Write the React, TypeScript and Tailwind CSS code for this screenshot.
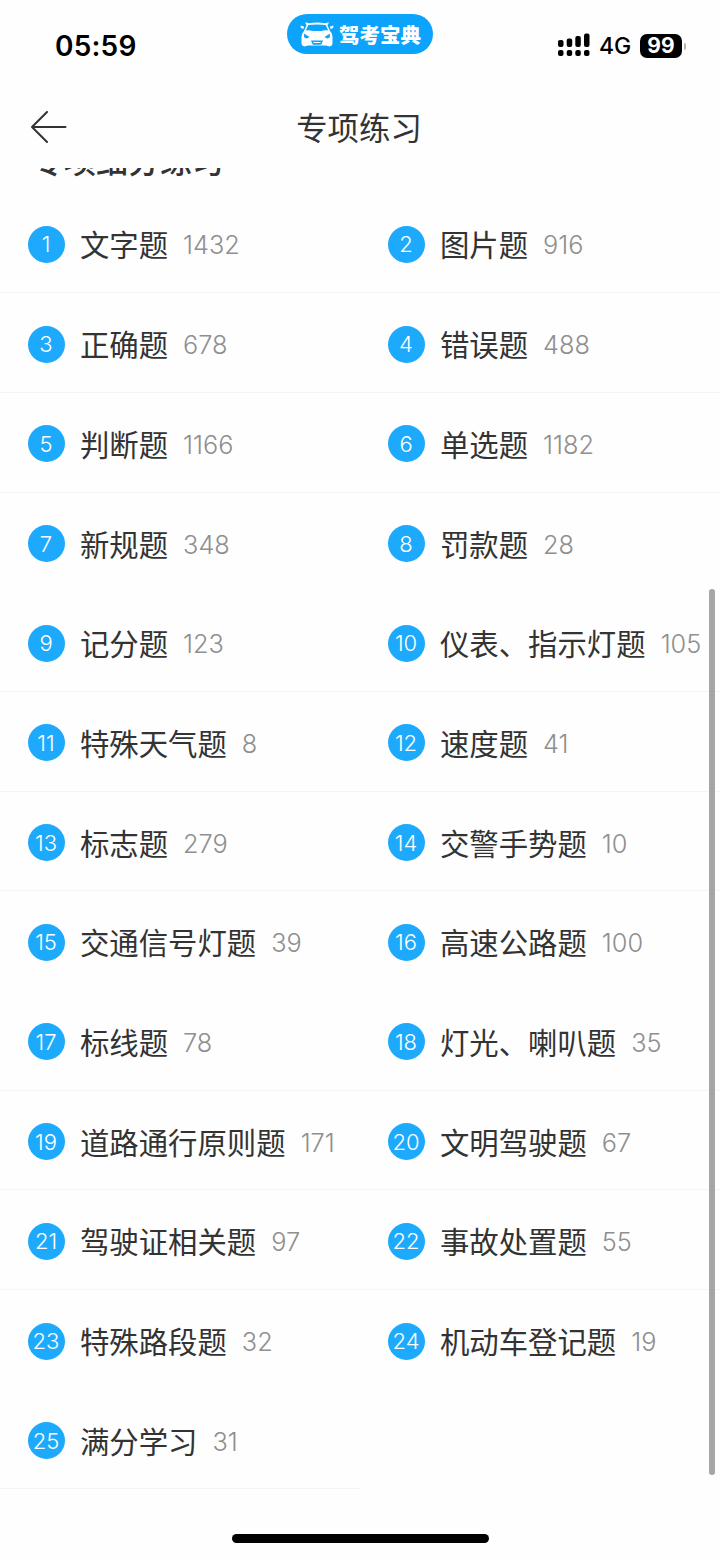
import clsx from "clsx";

const topics = [
    { title: "文字题", count: 1432 },
    { title: "图片题", count: 916 },
    { title: "正确题", count: 678 },
    { title: "错误题", count: 488 },
    { title: "判断题", count: 1166 },
    { title: "单选题", count: 1182 },
    { title: "新规题", count: 348 },
    { title: "罚款题", count: 28 },
    { title: "记分题", count: 123 },
    { title: "仪表、指示灯题", count: 105 },
    { title: "特殊天气题", count: 8 },
    { title: "速度题", count: 41 },
    { title: "标志题", count: 279 },
    { title: "交警手势题", count: 10 },
    { title: "交通信号灯题", count: 39 },
    { title: "高速公路题", count: 100 },
    { title: "标线题", count: 78 },
    { title: "灯光、喇叭题", count: 35 },
    { title: "道路通行原则题", count: 171 },
    { title: "文明驾驶题", count: 67 },
    { title: "驾驶证相关题", count: 97 },
    { title: "事故处置题", count: 55 },
    { title: "特殊路段题", count: 32 },
    { title: "机动车登记题", count: 19 },
    { title: "满分学习", count: 31 },
];

// Rows (0-based) whose hairline is not drawn
const plainRows = [3, 7, 11];

function CarLogo() {
    return (
        <svg viewBox="0 0 34 26" className="h-[26px] w-[34px] shrink-0" fill="none">
            <path d="M4.500 10.500 8 3M29.500 10.500 26 3" stroke="white" strokeWidth="1.500" />
            <path d="M5 1.200 9 2.200Q17 1 25 2.200L29 1.200 27.500 4.200Q17 2.800 6.500 4.200Z" fill="white" />
            <path d="M0.500 4.500 4 5.500 3.500 8 0.800 7ZM33.500 4.500 30 5.500 30.500 8 33.200 7Z" fill="white" />
            <path
                d="M4.500 9.500 9 9.200Q17 11 25 9.200L29.500 9.500Q32.500 12 32.500 15.500V22Q32.500 25 29.500 25.500L26 24.500H8L4.500 25.500Q1.500 25 1.500 22V15.500Q1.500 12 4.500 9.500Z"
                fill="white"
            />
            <path d="M4 12.500 9.500 16 7 17.500 4.200 16.500ZM30 12.500 24.500 16 27 17.500 29.800 16.500Z" fill="#0ba3fb" />
            <path d="M11 19.500H23L21.200 23.800H12.800Z" fill="#0ba3fb" />
            <path d="M13.500 21.500H20.500" stroke="white" strokeWidth="1" />
        </svg>
    );
}

function StatusBar() {
    return (
        <header className="flex h-[86px] items-start">
            <div className="w-[287px] pl-[55px] pt-[28px] font-['Inter'] text-[28px] font-semibold leading-9 tracking-[0.2px] text-black">
                05:59
            </div>
            <div className="mt-[14px] flex h-10 w-[146px] items-center rounded-full bg-[#0ba3fb] pl-[13px]">
                <CarLogo />
                <span className="ml-[5px] whitespace-nowrap text-[20.5px] font-black leading-10 text-white">驾考宝典</span>
            </div>
            <div className="ml-[125px] mt-[34px] flex items-center">
                <svg viewBox="0 0 32 24" className="-mt-[2px] h-6 w-8" fill="black">
                    <rect x="0" y="7" width="5.500" height="7" rx="2" />
                    <rect x="8.700" y="5.500" width="5.500" height="8.500" rx="2" />
                    <rect x="17.300" y="3" width="5.500" height="11" rx="2" />
                    <rect x="26" y="0.500" width="5.500" height="13.500" rx="2" />
                    <rect x="0" y="17" width="5.500" height="6" rx="2" />
                    <rect x="8.700" y="17" width="5.500" height="6" rx="2" />
                    <rect x="17.300" y="17" width="5.500" height="6" rx="2" />
                    <rect x="26" y="17" width="5.500" height="6" rx="2" />
                </svg>
                <span className="ml-[9px] w-[41px] font-['Inter'] text-[23px] font-medium leading-6 text-black">4G</span>
                <span className="-mt-px flex h-[24px] w-[42px] items-center justify-center rounded-[7px] bg-black font-['Inter'] text-[21px] font-bold leading-none text-white">
                    99
                </span>
                <span className="ml-[2px] h-[7px] w-[2px] rounded-r-full bg-[#b5b5b5]" />
            </div>
        </header>
    );
}

function NavBar() {
    return (
        <nav className="grid h-[82px] grid-cols-[100px_1fr_100px] items-center">
            <svg viewBox="0 0 36 32" className="ml-[31px] h-8 w-9" fill="none" stroke="#333333" strokeWidth="2" strokeLinecap="round" strokeLinejoin="round">
                <path d="M16 1 1 16 16 31M1 16H34.500" />
            </svg>
            <h1 className="-ml-[2px] pb-px text-center text-[31.4px] font-normal leading-10 text-[#333333]">专项练习</h1>
        </nav>
    );
}

function TopicCell({ topic, index }: { topic: (typeof topics)[0]; index: number }) {
    const row = Math.floor(index / 2);
    return (
        <li
            className={clsx(
                "flex h-[99.7px] items-center whitespace-nowrap border-b pl-[27.5px] pt-[3.2px]",
                plainRows.includes(row) ? "border-transparent" : "border-[#f5f5f5]",
            )}
        >
            <span className="flex size-[37px] shrink-0 items-center justify-center rounded-full bg-[#1eaafc] font-['Inter'] text-[22px] font-light leading-none text-white">
                {index + 1}
            </span>
            <span className="ml-[15.4px] pb-[2px] text-[29.4px] leading-10 text-[#333333]">{topic.title}</span>
            <span className="ml-[15px] pt-[2px] font-['Inter'] text-[25.3px] font-light leading-10 text-[#8f8f8f]">{topic.count}</span>
        </li>
    );
}

export default function App() {
    return (
        <div className="relative flex h-[1558px] w-[720px] flex-col overflow-hidden bg-[#fefefe] font-['Noto_Sans_CJK_SC',sans-serif]">
            <StatusBar />
            <NavBar />
            <main className="h-[1340px] overflow-hidden">
                {/* Section heading, mostly scrolled under the nav bar */}
                <div className="flex h-[25.500px] items-end overflow-hidden pl-[32px]">
                    <h2 className="mb-[15px] text-[32px] font-medium leading-10 text-[#333333]">专项细分练习</h2>
                </div>
                <ul className="grid grid-cols-2">
                    {topics.map((topic, i) => (
                        <TopicCell key={topic.title} topic={topic} index={i} />
                    ))}
                </ul>
            </main>
            <div className="mx-auto mt-[26px] h-[9px] w-[257px] rounded-full bg-black" />

            {/* Scroll indicator */}
            <div className="absolute right-[5px] top-[589px] h-[886px] w-[6px] rounded-full bg-[#a6a6a6]" />
        </div>
    );
}
